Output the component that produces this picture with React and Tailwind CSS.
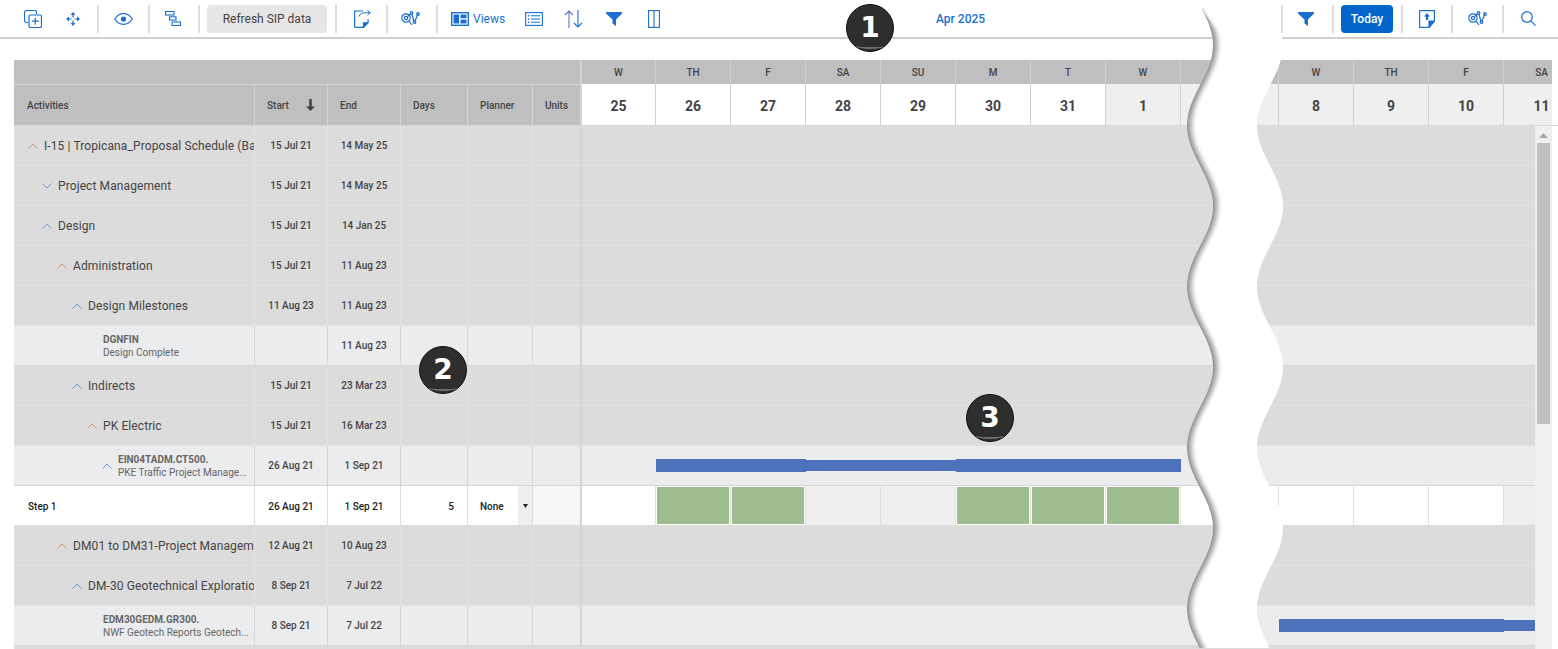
const BLUE = "#1a6fd0"

const rows = [
  { label: "I-15 | Tropicana_Proposal Schedule (Baseline)", level: 0, chev: "up", tone: "o", start: "15 Jul 21", end: "14 May 25" },
  { label: "Project Management", level: 1, chev: "down", tone: "b", start: "15 Jul 21", end: "14 May 25" },
  { label: "Design", level: 1, chev: "up", tone: "b", start: "15 Jul 21", end: "14 Jan 25" },
  { label: "Administration", level: 2, chev: "up", tone: "o", start: "15 Jul 21", end: "11 Aug 23" },
  { label: "Design Milestones", level: 3, chev: "up", tone: "b", start: "11 Aug 23", end: "11 Aug 23" },
  { code: "DGNFIN", name: "Design Complete", pad: "pl-[89px]", start: "", end: "11 Aug 23" },
  { label: "Indirects", level: 3, chev: "up", tone: "b", start: "15 Jul 21", end: "23 Mar 23" },
  { label: "PK Electric", level: 4, chev: "up", tone: "o", start: "15 Jul 21", end: "16 Mar 23" },
  { code: "EIN04TADM.CT500.", name: "PKE Traffic Project Manage...", pad: "pl-[88px]", chev: true, start: "26 Aug 21", end: "1 Sep 21", bar: "first" },
  { step: true },
  { label: "DM01 to DM31-Project Management", level: 2, chev: "up", tone: "o", start: "12 Aug 21", end: "10 Aug 23" },
  { label: "DM-30 Geotechnical Exploration", level: 3, chev: "up", tone: "b", start: "8 Sep 21", end: "7 Jul 22" },
  { code: "EDM30GEDM.GR300.", name: "NWF Geotech Reports Geotech...", pad: "pl-[89px]", start: "8 Sep 21", end: "7 Jul 22", bar: "last" },
]

const levelPad = ["pl-[14px]", "pl-[28px]", "pl-[43px]", "pl-[58px]", "pl-[73px]"]

const dayCols = [
  { w: "w-[74px]", d: "W", n: "25" },
  { w: "w-[75px]", d: "TH", n: "26" },
  { w: "w-[75px]", d: "F", n: "27" },
  { w: "w-[75px]", d: "SA", n: "28" },
  { w: "w-[75px]", d: "SU", n: "29" },
  { w: "w-[75px]", d: "M", n: "30" },
  { w: "w-[75px]", d: "T", n: "31" },
  { w: "w-[75px]", d: "W", n: "1", off: true },
  { w: "w-[98px]", d: "", n: "", off: true },
  { w: "w-[75px]", d: "W", n: "8", off: true },
  { w: "w-[75px]", d: "TH", n: "9", off: true },
  { w: "w-[75px]", d: "F", n: "10", off: true },
]

function Sep({ className }) {
  return <div className={`w-[2px] h-7 bg-[#dcdcdc] shrink-0 ${className}`} />
}

function Chevron({ dir, tone }) {
  const color = tone === "o" ? "#c9976b" : "#6a9ad0"
  return (
    <svg width="10" height="6" viewBox="0 0 10 6" fill="none" stroke={color} strokeWidth="1" className="shrink-0">
      <path d={dir === "up" ? "M0.5 5.5 5 1l4.5 4.5" : "M0.5 0.5 5 5l4.5-4.5"} />
    </svg>
  )
}

function ChartSearch({ className }) {
  return (
    <svg width="19" height="15" viewBox="0 0 19 15" fill="none" stroke={BLUE} strokeWidth="1.2" className={`shrink-0 ${className}`}>
      <circle cx="5" cy="7" r="4.2" />
      <circle cx="5" cy="7" r="1.6" />
      <path d="M8 10l3 4M6.5 5.5 10 2.5M11 3l2 8M14 10l3-7" />
      <circle cx="10.5" cy="2" r="1.3" />
      <circle cx="13.5" cy="11" r="1.3" />
      <circle cx="17" cy="3" r="1.3" />
    </svg>
  )
}

function Filter({ className }) {
  return (
    <svg width="16" height="14" viewBox="0 0 16 14" fill={BLUE} className={`shrink-0 ${className}`}>
      <path d="M0 0h16v1.5L10 7.5V14L6.5 11.5V7.5L0 1.5z" />
    </svg>
  )
}

function Toolbar() {
  return (
    <div className="flex items-center h-[39px] border-b-2 border-[#cfcfcf]">
      <svg width="18" height="18" viewBox="0 0 18 18" fill="none" stroke={BLUE} strokeWidth="1.2" className="ml-[24px] shrink-0">
        <path d="M4 12.5H2.5a2 2 0 0 1-2-2v-8a2 2 0 0 1 2-2h8a2 2 0 0 1 2 2V4" />
        <rect x="5" y="5" width="12.5" height="12.5" rx="1.5" />
        <path d="M11.2 7.8v7M7.8 11.2h7" />
      </svg>
      <svg width="14" height="14" viewBox="0 0 14 14" fill={BLUE} className="ml-[24px] shrink-0">
        <path d="M7 0l2.400 3H4.600zM7 14l-2.400-3h4.800zM0 7l3-2.400v4.800zM14 7l-3 2.400V4.600z" />
        <path d="M6.400 3h1.200v2.500H6.400zM6.400 8.500h1.200V11H6.400zM3 6.400h2.500v1.200H3zM8.500 6.400H11v1.200H8.500z" />
      </svg>
      <Sep className="ml-[17px]" />
      <svg width="19" height="12" viewBox="0 0 19 12" fill="none" stroke={BLUE} strokeWidth="1.2" className="ml-[15px] shrink-0">
        <path d="M0.7 6C3 2.5 6 0.7 9.5 0.7S16 2.5 18.3 6C16 9.5 13 11.3 9.5 11.3S3 9.5 0.7 6z" />
        <circle cx="9.5" cy="6" r="2.6" fill={BLUE} stroke="none" />
      </svg>
      <Sep className="ml-[15px]" />
      <svg width="16" height="15" viewBox="0 0 16 15" fill="none" stroke={BLUE} strokeWidth="1.1" className="ml-[15px] shrink-0">
        <rect x="0.5" y="0.5" width="8.5" height="3.5" />
        <rect x="4.5" y="5.8" width="6.5" height="3.2" />
        <rect x="7" y="11" width="8.5" height="3.5" />
      </svg>
      <Sep className="ml-[17px]" />
      <button className="ml-[7px] w-[120px] h-7 shrink-0 rounded-sm bg-[#e6e6e6] text-xs text-[#444]">Refresh SIP data</button>
      <Sep className="ml-[8px]" />
      <svg width="18" height="18" viewBox="0 0 18 18" fill="none" stroke={BLUE} strokeWidth="1.2" className="ml-[16px] shrink-0">
        <path d="M10 1H1.6v15.4c0 .6.4 1 1 1h7.9l4.6-4.6V9" />
        <path d="M10.5 17.5v-4.7h4.6" fill={BLUE} />
        <path d="M6 6.5c1-3 3.500-3.700 6-3.700h5M14.500 0.500l2.800 2.300-2.800 2.300" strokeWidth="1" />
      </svg>
      <Sep className="ml-[15px]" />
      <ChartSearch className="ml-[13px]" />
      <Sep className="ml-[16px]" />
      <svg width="18" height="14" viewBox="0 0 18 14" className="ml-[13px] shrink-0">
        <rect x="0.7" y="0.7" width="16.600" height="12.600" fill="none" stroke={BLUE} strokeWidth="1.4" />
        <rect x="2.500" y="2.500" width="5.500" height="9" fill={BLUE} />
        <rect x="9.500" y="2.500" width="6" height="3.800" fill={BLUE} />
        <rect x="9.500" y="7.600" width="6" height="3.900" fill={BLUE} />
      </svg>
      <span className="ml-[4px] w-[32px] text-xs text-[#1a6fd0] shrink-0">Views</span>
      <svg width="18" height="14" viewBox="0 0 18 14" fill="none" stroke={BLUE} strokeWidth="1.1" className="ml-[20px] shrink-0">
        <rect x="0.600" y="0.600" width="16.800" height="12.800" />
        <path d="M6 3.800h9M6 7h9M6 10.200h9" />
        <path d="M2.800 3.800h1.500M2.800 7h1.500M2.800 10.200h1.500" strokeWidth="1.500" />
      </svg>
      <svg width="19" height="18" viewBox="0 0 19 18" fill="none" stroke={BLUE} strokeWidth="1.1" className="ml-[21px] shrink-0">
        <path d="M5 18V1M1 5l4-4 4 4" stroke="#5f6fc8" />
        <path d="M14 0v17M10 13l4 4 4-4" />
      </svg>
      <Filter className="ml-[23px]" />
      <svg width="12" height="18" viewBox="0 0 12 18" fill="none" stroke={BLUE} strokeWidth="1.1" className="ml-[26px] shrink-0">
        <rect x="0.600" y="0.600" width="10.800" height="16.800" />
        <path d="M6 0.600v16.800" />
      </svg>
      <span className="ml-[276px] text-xs font-medium text-[#1a6fd0] shrink-0">Apr 2025</span>

      <div className="ml-auto mr-[22px] flex items-center">
        <Sep />
        <Filter className="ml-[15px]" />
        <Sep className="ml-[18px]" />
        <button className="ml-[7px] w-[52px] h-7 shrink-0 rounded-sm bg-[#0066cc] text-xs font-medium text-white">Today</button>
        <Sep className="ml-[8px]" />
        <svg width="16" height="18" viewBox="0 0 16 18" fill="none" stroke={BLUE} strokeWidth="1.2" className="ml-[16px] shrink-0">
          <path d="M15.400 11V0.600H0.600v16.800h9.400z" />
          <path d="M10 17.400V11h5.400z" fill={BLUE} />
          <path d="M8 3l3 3.500H9.200V10H6.800V6.500H5z" fill={BLUE} stroke="none" />
        </svg>
        <Sep className="ml-[16px]" />
        <ChartSearch className="ml-[15px]" />
        <Sep className="ml-[15px]" />
        <svg width="15" height="15" viewBox="0 0 15 15" fill="none" stroke={BLUE} strokeWidth="1.2" className="ml-[17px] shrink-0">
          <circle cx="6" cy="6" r="5.300" />
          <path d="M9.800 9.800l4.800 4.800" />
        </svg>
      </div>
    </div>
  )
}

function HeadCell({ w, children, className = "" }) {
  return (
    <div className={`${w} flex items-center shrink-0 border-r border-[#d4d4d4] text-[10px] font-medium text-[#444] ${className}`}>
      {children}
    </div>
  )
}

function Header() {
  return (
    <div className="flex h-[66px] border-b border-[#d8d8d8]">
      <div className="w-[566px] shrink-0 flex flex-col bg-[#bfbfbf]">
        <div className="h-[25px] shrink-0 border-b border-[#d4d4d4]" />
        <div className="flex flex-1">
          <HeadCell w="w-[241px]" className="pl-[13px]">Activities</HeadCell>
          <HeadCell w="w-[73px]" className="pl-[12px] justify-between pr-[12px]">
            Start
            <svg width="9" height="12" viewBox="0 0 9 12" fill="#444">
              <path d="M3.200 0h2.600v7.500H9L4.500 12 0 7.500h3.200z" />
            </svg>
          </HeadCell>
          <HeadCell w="w-[73px]" className="pl-[12px]">End</HeadCell>
          <HeadCell w="w-[67px]" className="pl-[12px]">Days</HeadCell>
          <HeadCell w="w-[65px]" className="pl-[12px]">Planner</HeadCell>
          <div className="w-[47px] flex items-center justify-center text-[10px] font-medium text-[#444]">Units</div>
        </div>
      </div>
      <div className="w-[2px] shrink-0 bg-[#d4d4d4]" />
      {dayCols.map((c, i) => (
        <div key={i} className={`${c.w} shrink-0 flex flex-col border-r border-[#d0d0d0]`}>
          <div className="h-[24px] shrink-0 bg-[#bfbfbf] flex items-center justify-center text-[10px] font-medium text-[#444]">{c.d}</div>
          <div className={`flex-1 flex items-center justify-center pt-[3px] text-sm font-bold text-[#444] ${c.off ? "bg-[#efefef]" : "bg-white"}`}>{c.n}</div>
        </div>
      ))}
      <div className="w-[48px] shrink-0 overflow-hidden flex flex-col">
        <div className="h-[24px] shrink-0 w-[75px] bg-[#bfbfbf] flex items-center justify-center text-[10px] font-medium text-[#444]">SA</div>
        <div className="flex-1 w-[75px] bg-[#efefef] flex items-center justify-center pt-[3px] text-sm font-bold text-[#444]">11</div>
      </div>
    </div>
  )
}

function DataCell({ w, line, children, className = "" }) {
  return (
    <div className={`${w} shrink-0 flex items-center justify-center border-r ${line} ${className}`}>
      {children}
    </div>
  )
}

function GanttBar({ x, w, thin }) {
  return <div className={`${x} ${w} ${thin ? "h-[11px]" : "h-[13px]"} bg-[#4f72bd] shrink-0`} />
}

function StepRow() {
  const green = [1, 2, 5, 6, 7]
  const weekend = [3, 4]
  return (
    <div className="flex h-10 bg-white border-b border-[#dcdcdc]">
      <div className="w-[241px] shrink-0 flex items-center pl-[14px] pt-[2px] border-r border-[#dcdcdc] text-[10px] font-medium text-[#222]">Step 1</div>
      <DataCell w="w-[73px]" line="border-[#dcdcdc]" className="pt-[2px] text-[10px] font-medium text-[#222]">26 Aug 21</DataCell>
      <DataCell w="w-[73px]" line="border-[#dcdcdc]" className="pt-[2px] text-[10px] font-medium text-[#222]">1 Sep 21</DataCell>
      <DataCell w="w-[67px]" line="border-[#dcdcdc]" className="!justify-end pt-[2px] pr-[13px] text-[10px] font-medium text-[#222]">5</DataCell>
      <div className="w-[65px] shrink-0 flex items-center border-r border-[#dcdcdc] text-[10px] font-medium text-[#222]">
        <span className="pl-[12px] pt-[2px] flex-1">None</span>
        <span className="w-[14px] self-stretch flex items-center justify-center pt-[1px] bg-[#eeeeee] text-[#222]">
          <svg width="5" height="4" viewBox="0 0 5 4" fill="#222"><path d="M0 0h5L2.500 4z" /></svg>
        </span>
      </div>
      <div className="w-[47px] shrink-0 bg-[#f6f6f6]" />
      <div className="w-[2px] shrink-0 bg-[#d4d4d4]" />
      {dayCols.map((c, i) => (
        <div key={i} className={`${c.w} shrink-0 border-r border-[#e0e0e0] p-[1px] ${weekend.includes(i) ? "bg-[#efefef]" : ""}`}>
          {green.includes(i) && <div className="h-full bg-[#9dbd8f]" />}
        </div>
      ))}
      <div className="w-[31px] shrink-0 bg-[#efefef]" />
    </div>
  )
}

function Row({ row }) {
  if (row.step) return <StepRow />
  const leaf = !!row.code
  const bg = leaf ? "bg-[#ebecee]" : "bg-[#dcdcdc]"
  const line = leaf ? "border-[#d6d6d6]" : "border-[#e2e2e2]"
  return (
    <div className={`flex h-10 border-b ${bg} ${line}`}>
      <div className={`w-[241px] shrink-0 overflow-hidden whitespace-nowrap border-r ${line}`}>
        {leaf ? (
          <div className={`flex items-center h-full gap-[6px] ${row.pad}`}>
            {row.chev && <Chevron dir="up" tone="b" />}
            <div className="text-[10px] leading-[13px] text-[#666]">
              <div className="font-bold">{row.code}</div>
              <div>{row.name}</div>
            </div>
          </div>
        ) : (
          <div className={`flex items-center h-full gap-[6px] text-xs tracking-[0.1px] text-[#444] ${levelPad[row.level]}`}>
            <Chevron dir={row.chev} tone={row.tone} />
            {row.label}
          </div>
        )}
      </div>
      <DataCell w="w-[73px]" line={line} className="text-[10px] font-medium text-[#444]">{row.start}</DataCell>
      <DataCell w="w-[73px]" line={line} className="text-[10px] font-medium text-[#444]">{row.end}</DataCell>
      <DataCell w="w-[67px]" line={line} />
      <DataCell w="w-[65px]" line={line} />
      <div className="w-[47px] shrink-0" />
      <div className="w-[2px] shrink-0 bg-[#d4d4d4]" />
      <div className="flex-1 flex items-center">
        {row.bar === "first" && (
          <>
            <GanttBar x="ml-[74px]" w="w-[150px]" />
            <GanttBar x="" w="w-[150px]" thin />
            <GanttBar x="" w="w-[225px]" />
          </>
        )}
        {row.bar === "last" && (
          <>
            <GanttBar x="ml-[697px]" w="w-[225px]" />
            <GanttBar x="" w="w-[31px]" thin />
          </>
        )}
      </div>
    </div>
  )
}

function Scrollbar() {
  return (
    <div className="w-[17px] shrink-0 bg-[#f0f0f0] flex flex-col items-center pt-[7px]">
      <svg width="9" height="5" viewBox="0 0 9 5" fill="#a8a8a8" className="mb-[5px]"><path d="M4.500 0 9 5H0z" /></svg>
      <div className="w-[13px] h-[281px] bg-[#bfbfbf]" />
    </div>
  )
}

function Callout({ n, className }) {
  return (
    <div className={`absolute w-[48px] h-[48px] rounded-full bg-[#2e2e2e] border border-[#111] flex items-center justify-center text-[28px] font-bold text-white [font-family:'DejaVu_Sans',sans-serif] ${className}`}>
      {n}
      <div className="absolute left-[9px] bottom-[2px] w-[28px] h-[6px] rounded-b-[50%] border-b-2 border-[#6e6e6e]" />
    </div>
  )
}

// torn-paper gap over the timeline
function Tear() {
  const left = (y) => 1200 + 13 * Math.cos((2 * Math.PI * (y - 45)) / 161)
  const ys = []
  for (let y = 0; y <= 650; y += 3) ys.push(y)
  const band =
    "M" + ys.map((y) => `${left(y).toFixed(1)} ${y}`).join("L") +
    "L" + [...ys].reverse().map((y) => `${(left(y) + 70).toFixed(1)} ${y}`).join("L") + "Z"
  const grays = ["#959595", "#a2a2a2", "#b0b0b0", "#bebebe", "#cccccc", "#dadada", "#e8e8e8", "#f4f4f4"]
  const shade = (i) =>
    "M" + ys.filter((y) => y >= 8).map((y) => `${(left(y) + 0.8 + i * Math.min(1, (y - 8) / 24)).toFixed(1)} ${y}`).join("L")
  return (
    <svg width="1558" height="649" viewBox="0 0 1558 649" className="absolute inset-0 pointer-events-none">
      <path d={band} fill="#fff" />
      {grays.map((g, i) => (
        <path key={i} d={shade(i)} fill="none" stroke={g} strokeWidth="1.6" />
      ))}
    </svg>
  )
}

export default function App() {
  return (
    <div className="relative w-[1558px] h-[649px] overflow-hidden bg-white [font-family:Roboto,sans-serif]">
      <Toolbar />
      <div className="ml-[14px] mt-[21px]">
        <Header />
        <div className="flex">
          <div className="w-[1521px] shrink-0">
            {rows.map((r, i) => (
              <Row key={i} row={r} />
            ))}
            <div className="h-[3px] bg-[#dcdcdc]" />
          </div>
          <Scrollbar />
        </div>
      </div>
      <Tear />
      <Callout n="1" className="left-[846px] top-[4px]" />
      <Callout n="2" className="left-[419px] top-[346px]" />
      <Callout n="3" className="left-[966px] top-[394px]" />
    </div>
  )
}
